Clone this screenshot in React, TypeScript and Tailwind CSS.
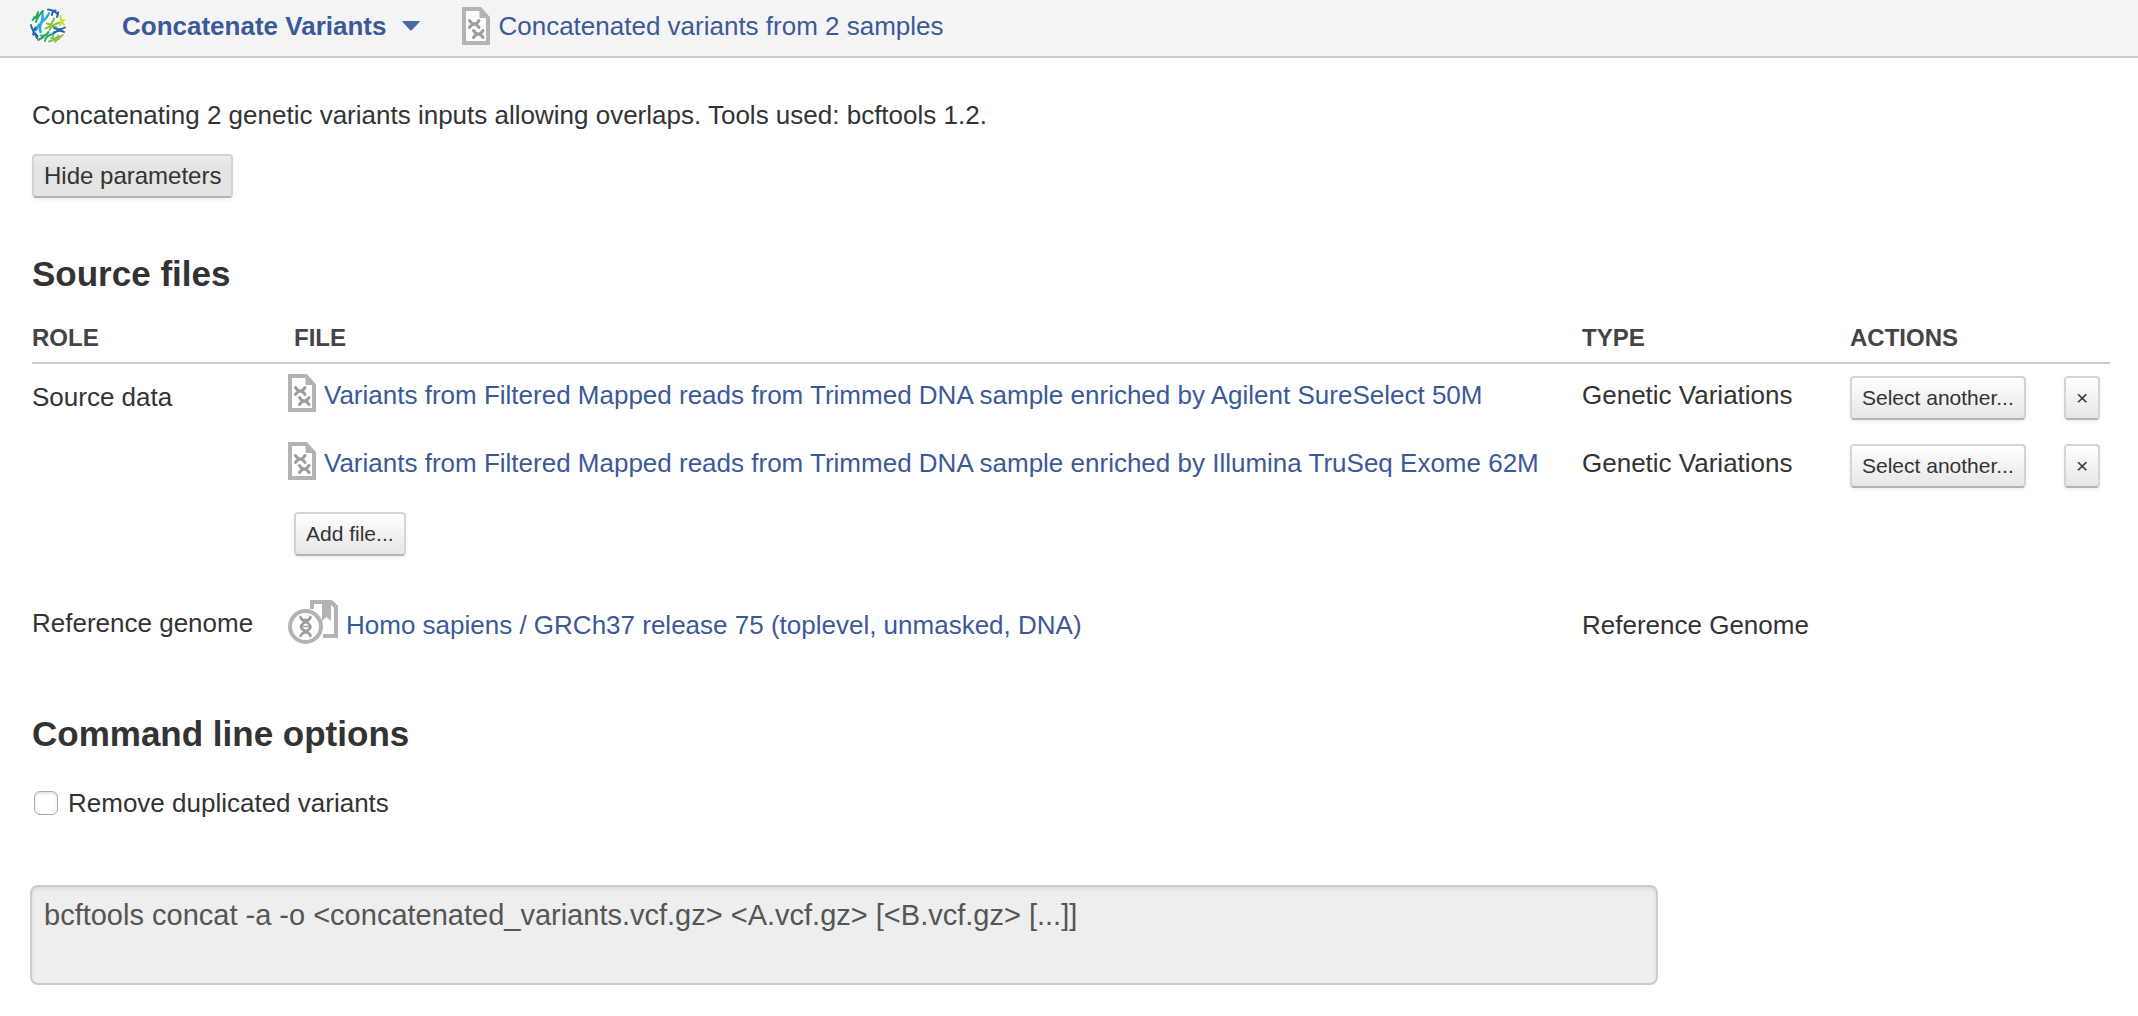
import type { ReactNode } from "react";

function FileIcon() {
  return (
    <svg aria-hidden="true" viewBox="0 0 28 38" className="h-[38px] w-7 shrink-0" fill="none">
      <path d="M2 2H18L26 11V36H2Z" fill="#fff" fillOpacity="0.6" stroke="#b3b3b3" strokeWidth="4" />
      <path d="M18 1L27 10.500H18Z" fill="#b3b3b3" stroke="#b3b3b3" />
      <g stroke="#9c9c9c" strokeWidth="3" strokeLinecap="round">
        <path d="M7.500 13.500Q9.500 17 12.300 17Q15 17 17 13.500M7.500 20.500Q9.500 17 12.300 17Q15 17 17 20.500" />
        <path d="M11.500 23.500Q13.500 27 16.300 27Q19 27 21 23.500M11.500 30.500Q13.500 27 16.300 27Q19 27 21 30.500" />
      </g>
    </svg>
  );
}

function GenomeIcon() {
  return (
    <svg aria-hidden="true" viewBox="0 0 50 44" className="h-11 w-[50px] shrink-0" fill="none">
      <path d="M24 9V2H43L48 7V36H35" stroke="#b3b3b3" strokeWidth="4" />
      <path d="M34 2H43V21L38.500 17L34 21Z" fill="#b3b3b3" />
      <path d="M43 1H45L50 6V9Z" fill="#b3b3b3" />
      <circle cx="17.500" cy="26.500" r="15.500" fill="#fff" stroke="#b3b3b3" strokeWidth="4" />
      <g stroke="#9c9c9c" strokeWidth="2.600" strokeLinecap="round">
        <path d="M12.500 17C13 22 22.500 22 22.500 27C22.500 31 14 31 12.500 36" />
        <path d="M22.500 17C22 22 13 22 13 27C13 31 22 31 22.500 36" />
        <path d="M15 19.500H20M14 26.500H22M15 33H20" strokeWidth="1.600" />
      </g>
    </svg>
  );
}

function Logo() {
  return (
    <svg aria-hidden="true" viewBox="0 0 36 36" className="size-9 shrink-0" fill="none" strokeLinecap="round">
      <defs>
        <clipPath id="disc">
          <circle cx="18" cy="18" r="18" />
        </clipPath>
      </defs>
      <g clipPath="url(#disc)">
        <circle cx="18" cy="18" r="18" fill="#f8faf6" />
        <g stroke="#29abe2" strokeWidth="2.500">
          <path d="M12 4Q13.500 10 11.500 14Q9 19 10.500 24M19 5.500Q16 11 12 14Q8 17 6 22" />
          <path d="M20 27L25 24M23 28.500L24 23.500" strokeWidth="1.600" />
        </g>
        <g stroke="#27a35a" strokeWidth="2">
          <path d="M2.500 12Q7 9 8 4M6 14Q7 9 13 3M9 7.500L4 9.500" />
          <path d="M11 27.500Q16 28.500 18.500 24M15 33Q15.500 28.500 21 26.500M8 32L13.500 29" />
        </g>
        <g stroke="#8bbf3f" strokeWidth="2.100">
          <path d="M15.500 20.500Q21 19 24 10.500M19.500 22Q21 17.500 29 14.500M17 15.500Q22 17 27 20" />
          <path d="M19 33.500Q26 32 28.500 27.500M25 34.500Q27 30 33.500 27M21 30L29 31" />
        </g>
        <g stroke="#2566ae" strokeWidth="2">
          <path d="M18 1.500Q24 2 28 6.500M22 7Q22 3 26 2M28.500 3.500L27 9" />
          <path d="M24 20Q29 23 35 19.500M24 25Q29 20.500 35 24.500" />
          <path d="M1 17Q2 23 7.500 28M5.500 19.500Q3 24 3 27M2 20L7 30" />
        </g>
        <g stroke="#cbdb2a" strokeWidth="2">
          <path d="M30.500 8Q30 13 34 16.500M34 12Q31 13 30 17" />
        </g>
      </g>
    </svg>
  );
}

const buttonBase =
  "h-11 whitespace-nowrap rounded border-2 border-[#d4d4d4] border-b-[#b3b3b3] text-[#333] shadow-[0_2px_4px_rgba(0,0,0,0.06)]";

function SmallButton({ children, label }: { children: ReactNode; label?: string }) {
  return (
    <button
      type="button"
      aria-label={label}
      className={`${buttonBase} bg-linear-to-b from-white to-[#e6e6e6] px-2.5 text-[21px] leading-[30px]`}
    >
      {children}
    </button>
  );
}

function FileLink({ children, icon }: { children: ReactNode; icon: ReactNode }) {
  return (
    <a href="#file" className="-ml-1.5 flex items-start gap-2 whitespace-nowrap text-[#3b5998]">
      {icon}
      {children}
    </a>
  );
}

const files = [
  "Variants from Filtered Mapped reads from Trimmed DNA sample enriched by Agilent SureSelect 50M",
  "Variants from Filtered Mapped reads from Trimmed DNA sample enriched by Illumina TruSeq Exome 62M",
];

const headCell = "border-b-2 border-[#ccc] pt-1 pb-2";

export default function App() {
  return (
    <div className="min-h-screen bg-white font-['Liberation_Sans',Arial,sans-serif] text-[26px] leading-9 text-[#333]">
      <header className="flex h-[58px] items-center border-b-2 border-[#ccc] bg-[#f4f4f4] pb-1 pl-[30px] text-[#3b5998]">
        <Logo />
        <button type="button" className="ml-14 flex items-center gap-4 font-bold">
          Concatenate Variants
          <svg aria-hidden="true" viewBox="0 0 18 10" className="h-2.5 w-[18px]" fill="#4a67a8">
            <path d="M1 0H17Q18 0 17.500 1L10 9Q9 10 8 9L0.500 1Q0 0 1 0Z" />
          </svg>
        </button>
        <a href="#result" className="ml-[42px] flex items-center gap-2">
          <FileIcon />
          Concatenated variants from 2 samples
        </a>
      </header>

      <main className="pt-[39px] pr-7 pl-8">
        <p>Concatenating 2 genetic variants inputs allowing overlaps. Tools used: bcftools 1.2.</p>
        <button
          type="button"
          className={`${buttonBase} mt-[21px] bg-linear-to-b from-[#ededed] to-[#e4e4e4] to-30% px-2.5 text-[24px] leading-8`}
        >
          Hide parameters
        </button>

        <h2 className="mt-[52px] text-[35px] leading-12 font-bold">Source files</h2>

        <table className="mt-5 w-full table-fixed border-separate border-spacing-0 text-left">
          <colgroup>
            <col className="w-[262px]" />
            <col />
            <col className="w-[268px]" />
            <col className="w-[214px]" />
            <col className="w-[46px]" />
          </colgroup>
          <thead className="text-2xl leading-8 text-[#444]">
            <tr>
              <th className={headCell}>ROLE</th>
              <th className={headCell}>FILE</th>
              <th className={headCell}>TYPE</th>
              <th className={headCell} colSpan={2}>
                ACTIONS
              </th>
            </tr>
          </thead>
          <tbody className="align-top">
            {files.map((name, i) => (
              <tr key={name} className="h-[68px]">
                <td className="pt-[15px]">{i === 0 ? "Source data" : ""}</td>
                <td className="pt-2.5">
                  <FileLink icon={<FileIcon />}>
                    <span className="pt-[3px]">{name}</span>
                  </FileLink>
                </td>
                <td className="pt-[13px]">Genetic Variations</td>
                <td className="pt-3">
                  <SmallButton>Select another...</SmallButton>
                </td>
                <td className="pt-3">
                  <SmallButton label="Remove file">×</SmallButton>
                </td>
              </tr>
            ))}
            <tr className="h-[88px]">
              <td />
              <td className="pt-3" colSpan={4}>
                <SmallButton>Add file...</SmallButton>
              </td>
            </tr>
            <tr className="h-[68px]">
              <td className="pt-[17px]">Reference genome</td>
              <td className="pt-3">
                <FileLink icon={<GenomeIcon />}>
                  <span className="pt-[7px]">Homo sapiens / GRCh37 release 75 (toplevel, unmasked, DNA)</span>
                </FileLink>
              </td>
              <td className="pt-[19px]">Reference Genome</td>
              <td colSpan={2} />
            </tr>
          </tbody>
        </table>

        <h2 className="mt-[54px] text-[35px] leading-12 font-bold">Command line options</h2>

        <label className="mt-[27px] flex w-fit items-center gap-2.5 pl-0.5">
          <input
            type="checkbox"
            className="size-6 appearance-none rounded-md border border-[#aaa] bg-white shadow-[inset_0_2px_3px_rgba(0,0,0,0.12)] checked:bg-[#3b5998]"
          />
          Remove duplicated variants
        </label>

        <textarea
          readOnly
          aria-label="Command line"
          className="mt-16 -ml-0.5 block h-[100px] w-[78.350%] resize-none rounded-lg border-2 border-[#ccc] bg-[#eee] px-3 py-2.5 text-[29px] leading-9 text-[#555] shadow-[inset_0_2px_4px_rgba(0,0,0,0.08)] outline-none"
          defaultValue="bcftools concat -a -o <concatenated_variants.vcf.gz> <A.vcf.gz> [<B.vcf.gz> [...]]"
        />
      </main>
    </div>
  );
}
